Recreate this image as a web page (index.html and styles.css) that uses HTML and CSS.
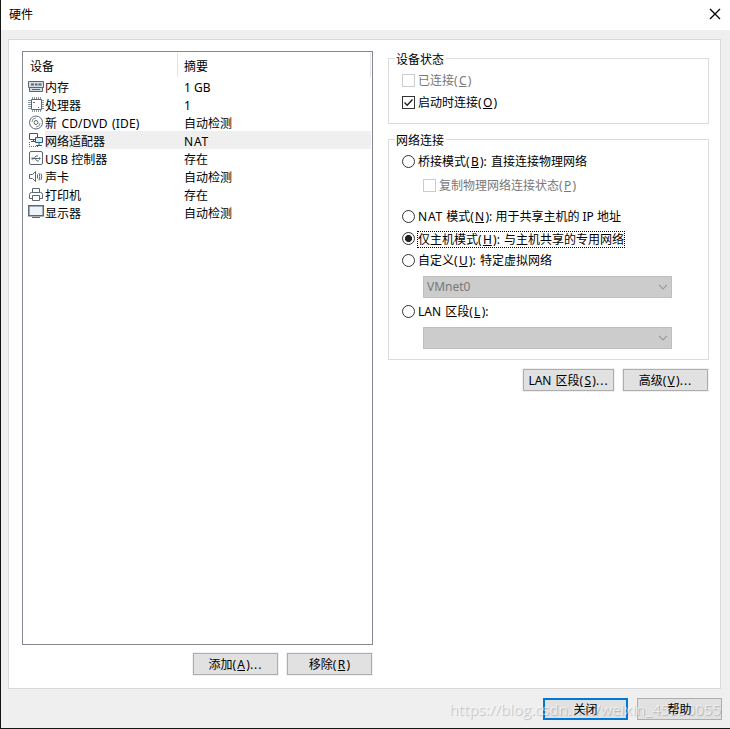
FILE: index.html
```html
<!DOCTYPE html>
<html lang="zh-CN">
<head>
<meta charset="utf-8">
<title>硬件</title>
<link rel="stylesheet" href="styles.css">
</head>
<body>
<div class="window">
  <header class="titlebar">
    <span class="title">硬件</span>
    <svg class="close" width="12" height="12" viewBox="0 0 12 12"><path d="M1 1l10 10M11 1L1 11"/></svg>
  </header>
  <main class="panel">
    <section class="left">
      <div class="list">
        <div class="list-head"><span class="col-a">设备</span><span class="col-b">摘要</span></div>
        <div class="row"><svg class="icon" viewBox="0 0 17 18"><path class="soft" d="M.5 3.500h15v6H.5zM1.500 9.500h13v4h-13z"/><path d="M4 11.500h8"/><path class="thick" d="M3 6.500h3M7 6.500h2.500M10.500 6.500h3"/></svg><span class="name">内存</span><span class="value gb">1 GB</span></div>
        <div class="row"><svg class="icon" viewBox="0 0 17 18"><path class="pins" d="M4.500 1v2M6.500 1v2M8.500 1v2M10.500 1v2M12.500 1v2M4.500 14v2M6.500 14v2M8.500 14v2M10.500 14v2M12.500 14v2M0 4.500h3M0 6.500h3M0 8.500h3M0 10.500h3M0 12.500h3M14 4.500h2M14 6.500h2M14 8.500h2M14 10.500h2M14 12.500h2"/><path d="M3.500 3.500h10v10h-10zM5 6.500h2M10 11.500h1"/></svg><span class="name">处理器</span><span class="value">1</span></div>
        <div class="row"><svg class="icon" viewBox="0 0 17 18"><circle cx="8" cy="8.500" r="6.500"/><circle cx="8" cy="8.500" r="2"/><path class="pins" d="M4 8a4 4 0 0 1 4-4M12 9a4 4 0 0 1-4 4"/></svg><span class="name cd">新 CD/DVD (IDE)</span><span class="value">自动检测</span></div>
        <div class="row selected"><svg class="icon" viewBox="0 0 17 18"><path class="blue" d="M1.500 1.500h8v6h-8zM5.500 7.500v2M3 9.500h4"/><path class="blue lit" d="M7.500 5.500h7v5h-7zM11 11v2M8 13.500h6"/><path class="dots" d="M1.500 10v5M1 14.500h10"/></svg><span class="name">网络适配器</span><span class="value nat">NAT</span></div>
        <div class="row"><svg class="icon" viewBox="0 0 17 18"><rect x="1.500" y="1.500" width="13" height="13" rx="1.500"/><path d="M4 8.500h8M6 8.500l2-2.500h2M7 8.500l2 2.500h2"/><path class="fill" d="M3.500 7.500h2v2h-2zM11 7l2 1.500-2 1.500z"/></svg><span class="name usb">USB 控制器</span><span class="value">存在</span></div>
        <div class="row"><svg class="icon low" viewBox="0 0 17 18"><path d="M1.500 5.500h3l3-3v10l-3-3h-3zM9.500 5.500v4M11 4q1.500 3.500 0 7.500M13 4.500q1.500 3 0 6.500"/></svg><span class="name">声卡</span><span class="value">自动检测</span></div>
        <div class="row"><svg class="icon low" viewBox="0 0 17 18"><path d="M4.500 5.500v-4h7v4M4.500 11.500h-3v-4q0-2 2-2h9q2 0 2 2v4h-3M4.500 8.500h7v5h-7z"/></svg><span class="name">打印机</span><span class="value">存在</span></div>
        <div class="row"><svg class="icon low" viewBox="0 0 17 18"><path class="screen" d="M.8 .8h14.500v10H.8z"/><path d="M4 12.500h8"/></svg><span class="name">显示器</span><span class="value">自动检测</span></div>
      </div>
      <div class="actions"><div class="button">添加(<u>A</u>)<b>...</b></div><div class="button">移除(<u>R</u>)</div></div>
    </section>
    <section class="right">
      <fieldset class="status">
        <legend>设备状态</legend>
        <div class="option muted"><i class="check"></i><span>已连接(<u>C</u>)</span></div>
        <div class="option"><i class="check"><svg width="11" height="11" viewBox="0 0 11 11"><path d="M1.500 5.500l2.700 2.700L9.500 2.500"/></svg></i><span>启动时连接(<u>O</u>)</span></div>
      </fieldset>
      <fieldset class="network">
        <legend>网络连接</legend>
        <div class="option bridge"><i class="radio"></i><span>桥接模式(<u>B</u>): 直接连接物理网络</span></div>
        <div class="option muted sub"><i class="check"></i><span>复制物理网络连接状态(<u>P</u>)</span></div>
        <div class="option natmode"><i class="radio"></i><span><span class="nat">NAT</span> 模式(<u>N</u>): 用于共享主机的 IP 地址</span></div>
        <div class="option"><i class="radio on"></i><span class="focus">仅主机模式(<u>H</u>): 与主机共享的专用网络</span></div>
        <div class="option"><i class="radio"></i><span>自定义(<u>U</u>): 特定虚拟网络</span></div>
        <div class="select"><span>VMnet0</span><svg width="10" height="6" viewBox="0 0 10 6"><path d="M1 .8l4 4 4-4"/></svg></div>
        <div class="option lan"><i class="radio"></i><span>LAN 区段(<u>L</u>):</span></div>
        <div class="select second"><span></span><svg width="10" height="6" viewBox="0 0 10 6"><path d="M1 .8l4 4 4-4"/></svg></div>
      </fieldset>
      <div class="actions tools"><div class="button wide">LAN 区段(<u>S</u>)<b>...</b></div><div class="button">高级(<u>V</u>)<b>...</b></div></div>
    </section>
  </main>
  <footer class="footer">
    <div class="button primary"><span>关闭</span></div>
    <div class="button help"><span>帮助</span></div>
    <div class="watermark">https://blog.csdn.net/weixin_45930055</div>
  </footer>
</div>
</body>
</html>
```

FILE: styles.css
```css
* { box-sizing: border-box; }
body { margin: 0; width: 730px; height: 729px; overflow: hidden; color: #000; font: 12px/18px "Noto Sans", "Noto Sans CJK SC", sans-serif; }
.window { width: 730px; height: 729px; background: #efefef; border-left: 1px solid #151515; border-bottom: 1px solid #151515; white-space: nowrap; }
.titlebar { height: 30px; background: #fff; display: flex; align-items: center; justify-content: space-between; padding: 0 8px; }
svg { display: block; fill: none; }
u { margin: 0 1.300px; }
b { font-weight: 400; letter-spacing: 1px; }
.close { margin-right: 1px; margin-top: -2px; stroke: #000; stroke-width: 1.3; }
.panel { display: flex; width: 713px; height: 650px; margin: 9px 0 0 7px; border: 1px solid #d9d9d9; background: #fff; padding: 11px 11px 0 13px; }
.left { width: 351px; flex: none; }
.list { height: 594px; border: 1px solid #828790; padding: 1px 1px 0 0; }
.list-head { display: flex; height: 24px; border-right: 1px solid #e5e5e5; line-height: 27px; }
.col-a { width: 155px; border-right: 1px solid #e5e5e5; padding-left: 7px; }
.col-b { padding-left: 6px; }
.row { display: flex; height: 18px; line-height: 21px; padding-left: 5px; }
.icon { width: 17px; height: 18px; margin-top: 1px; stroke: #5b6874; flex: none; overflow: visible; }
.low { margin-top: 2px; }
.icon .soft { fill: #d4dde2; }
.icon .thick { stroke-width: 2; }
.icon .pins { stroke: #8b959e; }
.icon .blue { stroke: #285e7e; fill: #fff; }
.icon .lit { fill: #d8effb; }
.icon .dots { stroke-dasharray: 1 1; }
.icon .fill { fill: #5b6874; stroke: none; }
.icon .screen { fill: #edf4fa; stroke-width: 1.5; }
.name { width: 133px; }
.cd { word-spacing: 1px; letter-spacing: .15px; }
.nat { letter-spacing: .8px; }
.value { flex: 1; padding-left: 6px; }
.selected .name, .selected .value { background: #efefef; }
.actions { display: flex; justify-content: flex-end; gap: 9px; margin-top: 8px; padding-right: 1px; }
.button { width: 85px; height: 22px; border: 1px solid #adadad; background: #e1e1e1; text-align: center; line-height: 22px; box-shadow: 0 0 0 1px #f0f0f0; }
.right { width: 321px; flex: none; margin-left: 15px; padding-top: 7px; }
fieldset { display: block; position: relative; margin: 0; border: 1px solid #dcdcdc; min-width: 0; padding: 0 0 0 13px; }
legend { position: absolute; left: 6px; top: -8px; padding: 0 2px 0 1px; background: #fff; line-height: 18px; }
.status { height: 66px; padding-top: 11px; }
.network { height: 221px; margin-top: 15px; padding-top: 11px; }
.option { display: flex; align-items: center; height: 22px; gap: 3px; word-spacing: 1px; }
.option.natmode { word-spacing: 0; }
.muted { color: #787878; }
.check { width: 13px; height: 13px; border: 1px solid #333; flex: none; margin-bottom: 2px; }
.muted .check { border-color: #ccc; }
.check svg { stroke: #222; stroke-width: 1.4; }
.radio { width: 13px; height: 13px; border: 1px solid #333; border-radius: 50%; flex: none; margin-bottom: 2px; }
.radio.on { background: radial-gradient(circle, #222 0 3.300px, transparent 3.800px); }
.sub { margin: 2px 0 9px 21px; }
.focus { outline: 1px dotted #000; line-height: 15px; }
.select { margin: 4px 0 3px 21px; width: 249px; height: 22px; border: 1px solid #bfbfbf; background: #ccc; color: #787878; display: flex; align-items: center; justify-content: space-between; padding: 0 3px; line-height: 20px; }
.select svg { stroke: #9b9b9b; stroke-width: 1.2; }
.second { margin-top: 4px; }
.tools { margin-top: 9px; }
.wide { width: 91px; word-spacing: 1px; }
.left .actions { padding-right: 1px; }
.footer { position: relative; display: flex; justify-content: flex-end; gap: 9px; padding: 9px 8px 0 0; }
.primary { border: 2px solid #0078d7; line-height: 20px; box-shadow: none; }
.footer .button span { position: relative; z-index: 2; }
.watermark { position: absolute; z-index: 1; right: 9px; top: 8px; font: 15.100px/24px "Open Sans", sans-serif; color: rgba(255,255,255,.55); text-shadow: 1px 1px 1px rgba(0,0,0,.2); }
```
